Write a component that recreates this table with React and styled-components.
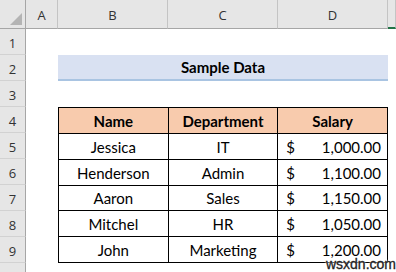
import React from 'react'
import styled, { createGlobalStyle } from 'styled-components'

const GlobalStyle = createGlobalStyle`
  html, body {
    margin: 0;
    padding: 0;
    background: #ffffff;
    overflow: hidden;
  }
`

const columns = ['A', 'B', 'C', 'D', '']
// row 10 is only partly in view, its label falls below the window
const rowNumbers = [1, 2, 3, 4, 5, 6, 7, 8, 9, 10]

const employees = [
  { name: 'Jessica', dept: 'IT', salary: '1,000.00' },
  { name: 'Henderson', dept: 'Admin', salary: '1,100.00' },
  { name: 'Aaron', dept: 'Sales', salary: '1,150.00' },
  { name: 'Mitchel', dept: 'HR', salary: '1,050.00' },
  { name: 'John', dept: 'Marketing', salary: '1,200.00' },
]

function App() {
  return (
    <>
      <GlobalStyle />
      <Sheet>
        <Corner>
          <svg width="12" height="12" viewBox="0 0 12 12">
            <polygon points="12,0 12,12 0,12" fill="#b4b4b4" />
          </svg>
        </Corner>
        {columns.map((c, i) => (
          <ColHead key={i} $col={i + 2} $active={c === ''}>{c}</ColHead>
        ))}
        {rowNumbers.map((n) => (
          <RowHead key={n} $row={n + 1}>{n < 10 ? n : ''}</RowHead>
        ))}

        <TitleBand>Sample Data</TitleBand>

        <Table>
          <HeadCell>Name</HeadCell>
          <HeadCell>Department</HeadCell>
          <HeadCell>Salary</HeadCell>
          {employees.map((e) => (
            <React.Fragment key={e.name}>
              <Cell>{e.name}</Cell>
              <Cell>{e.dept}</Cell>
              <MoneyCell>
                <span>$</span>
                <span>{e.salary}</span>
              </MoneyCell>
            </React.Fragment>
          ))}
        </Table>

        <Watermark>wsxdn.com</Watermark>
      </Sheet>
    </>
  )
}

const Sheet = styled.div`
  position: relative;
  width: 396px;
  height: 272px;
  display: grid;
  grid-template-columns: 26px 32px 110px 110px 110px 1fr;
  grid-template-rows: 29px repeat(10, 26px);
  font-family: Lato, 'Liberation Sans', sans-serif;
  overflow: hidden;
`

const Corner = styled.div`
  grid-column: 1;
  grid-row: 1;
  background: #e6e6e6;
  border-right: 1px solid #a6a6a6;
  border-bottom: 1px solid #a6a6a6;
  display: flex;
  align-items: flex-end;
  justify-content: flex-end;
  padding: 0 3px 3px 0;
`

const ColHead = styled.div`
  grid-column: ${(p) => p.$col};
  grid-row: 1;
  background: #e6e6e6;
  border-right: 1px solid #c4c4c4;
  border-bottom: ${(p) => (p.$active ? '2px solid #217346' : '1px solid #a6a6a6')};
  display: flex;
  align-items: center;
  justify-content: center;
  padding-top: 2px;
  font-family: 'Open Sans', 'Noto Sans', sans-serif;
  font-size: 13px;
  color: #333;
`

const RowHead = styled.div`
  grid-column: 1;
  grid-row: ${(p) => p.$row};
  background: #e6e6e6;
  border-right: 1px solid #a6a6a6;
  border-bottom: 1px solid #d2d2d2;
  display: flex;
  align-items: center;
  justify-content: center;
  padding-top: 2px;
  font-family: 'Open Sans', 'Noto Sans', sans-serif;
  font-size: 13px;
  color: #333;
`

const TitleBand = styled.div`
  grid-column: 3 / span 3;
  grid-row: 3;
  background: #d9e1f2;
  border-bottom: 2px solid #a9c4e2;
  display: flex;
  align-items: center;
  justify-content: center;
  font-weight: 700;
  font-size: 15px;
  color: #000;
`

const Table = styled.div`
  grid-column: 3 / span 3;
  grid-row: 5 / span 6;
  display: grid;
  grid-template-columns: repeat(3, 1fr);
  grid-auto-rows: 1fr;
  gap: 1px;
  padding: 1px;
  background: #000;
`

const Cell = styled.div`
  background: #fff;
  display: flex;
  align-items: center;
  justify-content: center;
  font-size: 15px;
  color: #000;
  padding-top: 1px;
`

const HeadCell = styled(Cell)`
  background: #f8cbad;
  font-weight: 700;
`

const MoneyCell = styled(Cell)`
  justify-content: space-between;
  padding: 1px 6px 0 8px;
`

const Watermark = styled.div`
  position: absolute;
  right: 0;
  bottom: 1px;
  line-height: 14px;
  font-family: 'Liberation Sans', sans-serif;
  font-size: 14px;
  color: #222;
  -webkit-text-stroke: 0.3px #222;
  text-shadow: 0 0 2px #fff, 0 0 2px #fff;
`

export default App
